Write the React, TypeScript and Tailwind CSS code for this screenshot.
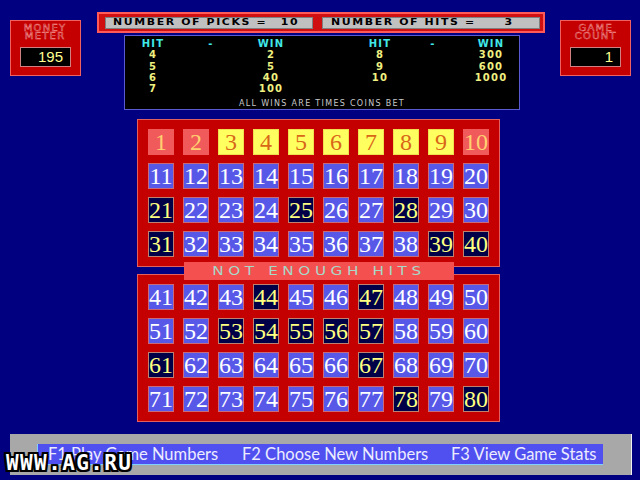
import React from "react";

const PICKS = new Set([1, 2, 3, 4, 5, 6, 7, 8, 9, 10]);
const HITS = new Set([1, 2, 10]);
const DRAWN = new Set([21, 25, 28, 31, 39, 40, 44, 47, 53, 54, 55, 56, 57, 61, 67, 78, 80]);

function Cell({ n }: { n: number }) {
  let cls = "bg-[#5858e8] text-white border-[#c86a7a]";
  if (HITS.has(n)) cls = "bg-[#f05a5a] text-[#ffd070] border-[#f05a5a]";
  else if (PICKS.has(n)) cls = "bg-[#ffff60] text-[#d86818] border-[#f0e050]";
  else if (DRAWN.has(n)) cls = "bg-[#000048] text-[#ffff80] border-[#c08070]";
  return (
    <div
      className={`w-[26px] h-[26px] border flex items-center justify-center leading-none text-[24px] font-['Liberation_Serif',serif] ${cls}`}
    >
      {n}
    </div>
  );
}

function Panel({ start }: { start: number }) {
  const nums = Array.from({ length: 40 }, (_, i) => start + i);
  return (
    <div className="w-[363px] h-[148px] bg-[#c40000] border border-[#e06060] pl-[10px] pt-[9px]">
      <div className="grid grid-cols-[repeat(10,26px)] gap-x-[9px] gap-y-[8px]">
        {nums.map((n) => (
          <Cell key={n} n={n} />
        ))}
      </div>
    </div>
  );
}

const ext = "font-['DejaVu_Sans',sans-serif]";

function SideBox({ l1, l2, value }: { l1: string; l2: string; value: string }) {
  return (
    <div className="w-[71px] h-[56px] bg-[#c40000] border border-[#f06060] flex flex-col items-center pt-[4px]">
      <div
        className={`${ext} text-[8px] leading-[8px] tracking-[1px] text-[#8a0000] text-center [-webkit-text-stroke:0.4px_#ff9090] scale-x-[1.25]`}
      >
        <div>{l1}</div>
        <div>{l2}</div>
      </div>
      <div className="mt-[6px] w-[51px] h-[20px] bg-black border border-[#d08080] flex items-center justify-end pr-[7px] text-[15px] text-[#ffff90] font-['Liberation_Sans',sans-serif]">
        {value}
      </div>
    </div>
  );
}

function PayCols({ a, b, c, d, e, f, cls }: { a: string; b: string; c: string; d: string; e: string; f: string; cls: string }) {
  return (
    <div className={`flex pl-[8px] h-[11.3px] leading-[11.3px] ${cls}`}>
      <span className="w-[40px] text-center">{a}</span>
      <span className="ml-[18px] w-[40px] text-center">{b}</span>
      <span className="ml-[20px] w-[40px] text-center">{c}</span>
      <span className="ml-[69px] w-[40px] text-center">{d}</span>
      <span className="ml-[13px] w-[40px] text-center">{e}</span>
      <span className="ml-[18px] w-[40px] text-center">{f}</span>
    </div>
  );
}

export default function App() {
  return (
    <div className="relative w-[640px] h-[480px] bg-[#000080] overflow-hidden flex flex-col">
      {/* top row */}
      <div className="flex items-start h-[110px]">
        <div className="ml-[10px] mt-[20px]">
          <SideBox l1="MONEY" l2="METER" value="195" />
        </div>
        <div className="ml-[16px] mt-[12px] w-[448px] flex flex-col">
          <div className="h-[21px] bg-[#d01010] border-2 border-[#ff5a5a] flex items-center pl-[6px]">
            <div className={`w-[208px] h-[12px] bg-[#c0c0c0] border border-[#808080] flex items-center ${ext} text-[9.5px] font-bold tracking-[1.4px] text-black`}>
              <span className="ml-[7px] scale-x-[1.15] origin-left">NUMBER OF PICKS =</span>
              <span className="ml-auto mr-[14px] scale-x-[1.15]">10</span>
            </div>
            <div className={`ml-[9px] w-[218px] h-[12px] bg-[#c0c0c0] border border-[#808080] flex items-center ${ext} text-[9.5px] font-bold tracking-[1.4px] text-black`}>
              <span className="ml-[8px] scale-x-[1.15] origin-left">NUMBER OF HITS =</span>
              <span className="ml-auto mr-[26px] scale-x-[1.15]">3</span>
            </div>
          </div>
          <div className={`ml-[27px] mt-[2px] w-[396px] h-[75px] bg-black border border-[#5a5ad0] pt-[2px] ${ext} text-[10px] font-bold tracking-[1.2px]`}>
            <PayCols a="HIT" b="-" c="WIN" d="HIT" e="-" f="WIN" cls="text-[#40e8e8]" />
            <PayCols a="4" b="" c="2" d="8" e="" f="300" cls="text-[#f0f080]" />
            <PayCols a="5" b="" c="5" d="9" e="" f="600" cls="text-[#f0f080]" />
            <PayCols a="6" b="" c="40" d="10" e="" f="1000" cls="text-[#f0f080]" />
            <PayCols a="7" b="" c="100" d="" e="" f="" cls="text-[#f0f080]" />
            <div className="mt-[5px] text-center text-[8px] leading-[9px] font-normal tracking-[1.3px] text-[#c8c8c8]">
              ALL WINS ARE TIMES COINS BET
            </div>
          </div>
        </div>
        <div className="ml-[15px] mt-[20px]">
          <SideBox l1="GAME" l2="COUNT" value="1" />
        </div>
      </div>

      {/* board */}
      <div className="relative mt-[9px] ml-[137px] w-[363px]">
        <Panel start={1} />
        <div className="mt-[7px]">
          <Panel start={41} />
        </div>
        <div className="absolute left-[47px] top-[143px] w-[270px] h-[18px] bg-[#f45050] flex items-center justify-center">
          <span className={`${ext} text-[12px] tracking-[3.6px] text-[#a8d8c8] scale-x-[1.27]`}>NOT ENOUGH HITS</span>
        </div>
      </div>

      {/* bottom bar */}
      <div className="mt-[12px] ml-[10px] w-[622px] h-[41px] bg-[#a8a8a8] border-r border-[#f0f0f0] pt-[10px] pl-[27px]">
        <div className="w-[566px] h-[21px] bg-[#5050f0] border-l border-b border-[#80d0ff] flex items-center pl-[10px] text-[16.5px] text-[#ececff] font-['Lato',sans-serif]">
          <span className="w-[194px]">F1 Play Game Numbers</span>
          <span className="w-[209px]">F2 Choose New Numbers</span>
          <span>F3 View Game Stats</span>
        </div>
      </div>

      {/* watermark */}
      <div className="absolute left-[6px] top-[448px] font-['DejaVu_Sans_Mono',monospace] font-bold text-[21px] tracking-[1.4px] text-white [text-shadow:2px_0_0_#000,-2px_0_0_#000,0_2px_0_#000,0_-2px_0_#000,2px_2px_0_#000,-2px_-2px_0_#000,2px_-2px_0_#000,-2px_2px_0_#000]">
        WWW.AG.RU
      </div>
    </div>
  );
}
